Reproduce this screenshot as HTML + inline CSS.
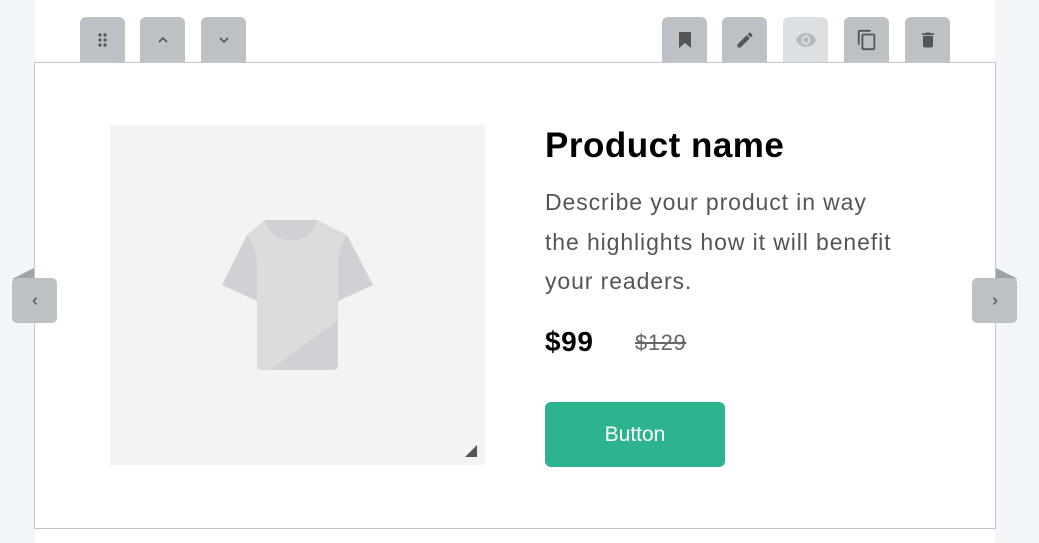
<!DOCTYPE html>
<html><head><meta charset="utf-8"><style>
body{margin:0;width:1039px;height:543px;background:#f3f6f9;position:relative;overflow:hidden;font-family:"Liberation Sans",sans-serif}
.page{position:absolute;left:35px;top:0;width:960px;height:543px;background:#fff}
.frame{position:absolute;left:34px;top:62px;width:960px;height:465px;border:1px solid #c3c7cb;background:#fff}
.tb{position:absolute;top:17px;width:45px;height:45px;background:#bcc1c5;border-radius:6px 6px 0 0;display:flex;align-items:center;justify-content:center}
.side{position:absolute;top:278px;width:45px;height:45px;background:#bcc1c5;border-radius:5px;display:flex;align-items:center;justify-content:center}
.img{position:absolute;left:110px;top:125px;width:375px;height:340px;background:#f2f3f5}
h1{position:absolute;left:545px;top:126px;margin:0;font-size:35px;font-weight:bold;color:#000;letter-spacing:0.5px}
.desc{position:absolute;left:545px;top:183px;width:420px;font-size:23px;line-height:39.5px;color:#555;letter-spacing:0.9px;white-space:nowrap}
.p1{position:absolute;left:545px;top:326px;font-size:28px;font-weight:bold;color:#000;letter-spacing:0.6px}
.p2{position:absolute;left:635px;top:330px;font-size:22px;color:#666;text-decoration:line-through;letter-spacing:0.6px}
.btn{position:absolute;left:545px;top:402px;width:180px;height:65px;background:#2db38f;border-radius:6px;color:#fff;font-size:21px;display:flex;align-items:center;justify-content:center}
</style></head><body>
<div class="page"></div>
<div class="frame"></div>
<div class="tb" style="left:80px"><svg width="12" height="16" viewBox="0 0 12 16" fill="#555"><circle cx="3" cy="3" r="1.6"/><circle cx="8" cy="3" r="1.6"/><circle cx="3" cy="8" r="1.6"/><circle cx="8" cy="8" r="1.6"/><circle cx="3" cy="13" r="1.6"/><circle cx="8" cy="13" r="1.6"/></svg></div>
<div class="tb" style="left:140px"><svg width="14" height="10" viewBox="0 0 14 10"><path d="M3 7L7 3L11 7" stroke="#555" stroke-width="1.6" fill="none"/></svg></div>
<div class="tb" style="left:201px"><svg width="14" height="10" viewBox="0 0 14 10"><path d="M3 3L7 7L11 3" stroke="#555" stroke-width="1.6" fill="none"/></svg></div>
<div class="tb" style="left:662px"><svg width="14" height="18" viewBox="0 0 14 18"><path d="M1 1H13V17L7 12L1 17Z" fill="#555"/></svg></div>
<div class="tb" style="left:722px"><svg width="20" height="20" viewBox="0 0 24 24"><path d="M3 17.25V21h3.75L17.81 9.94l-3.75-3.75L3 17.25zM20.71 7.04a1 1 0 000-1.41l-2.34-2.34a1 1 0 00-1.41 0l-1.83 1.83 3.75 3.75 1.83-1.83z" fill="#555"/></svg></div>
<div class="tb" style="left:783px;background:#dde0e3"><svg width="22" height="22" viewBox="0 0 24 24"><path d="M12 4.5C7 4.5 2.73 7.61 1 12c1.73 4.39 6 7.5 11 7.5s9.27-3.11 11-7.5c-1.73-4.39-6-7.5-11-7.5zM12 17a5 5 0 110-10 5 5 0 010 10zm0-8a3 3 0 100 6 3 3 0 000-6z" fill="#b5b9bd"/></svg></div>
<div class="tb" style="left:844px"><svg width="22" height="22" viewBox="0 0 24 24"><path d="M16 1H4c-1.1 0-2 .9-2 2v14h2V3h12V1zm3 4H8c-1.1 0-2 .9-2 2v14c0 1.1.9 2 2 2h11c1.1 0 2-.9 2-2V7c0-1.1-.9-2-2-2zm0 16H8V7h11v14z" fill="#555"/></svg></div>
<div class="tb" style="left:905px"><svg width="20" height="20" viewBox="0 0 24 24"><path d="M6 19c0 1.1.9 2 2 2h8c1.1 0 2-.9 2-2V7H6v12zM19 4h-3.5l-1-1h-5l-1 1H5v2h14V4z" fill="#555"/></svg></div>
<svg style="position:absolute;left:12px;top:268px" width="23" height="11"><path d="M0 11L22 0V11Z" fill="#9ea3a7"/></svg>
<svg style="position:absolute;left:996px;top:268px" width="23" height="11"><path d="M0 0L22 11H0Z" fill="#9ea3a7"/></svg>
<div class="side" style="left:12px"><svg width="10" height="12"><path d="M6.5 2.5L3.5 6L6.5 9.5" stroke="#555" stroke-width="1.4" fill="none"/></svg></div>
<div class="side" style="left:972px"><svg width="10" height="12"><path d="M3.5 2.5L6.5 6L3.5 9.5" stroke="#555" stroke-width="1.4" fill="none"/></svg></div>
<div class="img">
<svg style="position:absolute;left:112px;top:95px" width="152" height="151" viewBox="0 0 152 151">
<path d="M43 0H95L125 15L151 65L116 81V145Q116 150 111 150H40Q35 150 35 145V81L0 65L25 15Z" fill="#dbdcde"/>
<path d="M0 65L25 15Q35 30 35 45V81Z" fill="#cfd1d4"/><path d="M151 65L125 15Q116 30 116 45V81Z" fill="#cfd1d4"/>
<path d="M43 0Q48 20 69 20Q90 20 95 0Z" fill="#cfd1d4"/>
<path d="M116 100V145Q116 150 111 150H48Z" fill="#cfd1d4"/>
</svg>
<svg style="position:absolute;right:8px;bottom:8px" width="12" height="12"><path d="M12 0V12H0Z" fill="#555"/></svg>
</div>
<h1>Product name</h1>
<div class="desc">Describe your product in way<br>the highlights how it will benefit<br>your readers.</div>
<div class="p1">$99</div>
<div class="p2">$129</div>
<div class="btn">Button</div>
</body></html>
